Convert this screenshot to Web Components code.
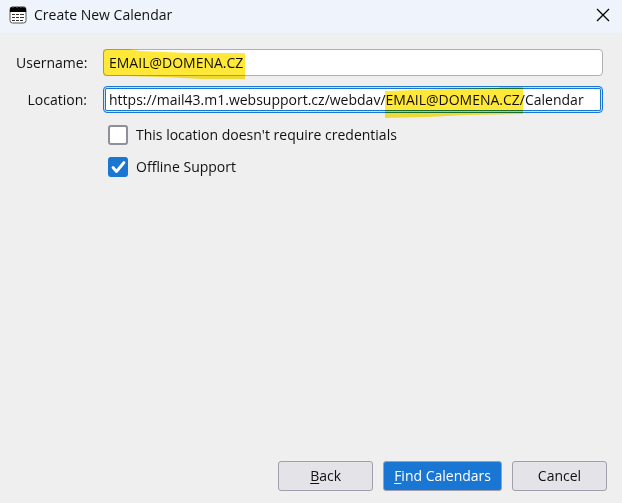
<!DOCTYPE html>
<html lang="en">
<head>
<meta charset="utf-8">
<meta name="viewport" content="width=device-width, initial-scale=1">
<title>Create New Calendar</title>
<style>
    body {
        margin: 0;
        background: #efefef;
        color: #111;
        font: 14px/20px "Open Sans", "Noto Sans", sans-serif;
    }
</style>
</head>
<body>
<calendar-dialog heading="Create New Calendar">
    <text-field label="Username:" value="EMAIL@DOMENA.CZ">
        <marker-stroke slot="marker" style="--start: 0px; --length: 142px"></marker-stroke>
    </text-field>
    <text-field label="Location:" value="https://mail43.m1.websupport.cz/webdav/EMAIL@DOMENA.CZ/Calendar" active>
        <marker-stroke slot="marker" rising style="--start: 282px; --length: 138px"></marker-stroke>
    </text-field>
    <div>
        <check-option label="This location doesn't require credentials"></check-option>
        <check-option label="Offline Support" checked></check-option>
    </div>
    <dialog-button slot="actions"><u>B</u>ack</dialog-button>
    <dialog-button slot="actions" primary><u>F</u>ind Calendars</dialog-button>
    <dialog-button slot="actions">Cancel</dialog-button>
</calendar-dialog>

<script>
class CalendarDialog extends HTMLElement {
    constructor() {
        super();
        this.attachShadow({ mode: 'open' });
    }
    connectedCallback() {
        this.shadowRoot.innerHTML = `
        <style>
            :host {
                display: flex;
                flex-direction: column;
                min-height: 100vh;
            }
            header {
                display: flex;
                align-items: center;
                gap: 7px;
                box-sizing: border-box;
                height: 33px;
                padding: 0 12px 4px 9px;
                background: #eff3fb;
            }
            h1 {
                flex: 1;
                margin: 0;
                font-size: 14px;
                font-weight: normal;
            }
            .close {
                display: flex;
                padding: 0;
                border: 0;
                background: none;
            }
            main {
                flex: 1;
                display: flex;
                flex-direction: column;
                gap: 10px;
                padding: 16px 19px 16px 16px;
            }
            footer {
                display: flex;
                justify-content: flex-end;
                gap: 10px;
                padding: 0 15px 12px;
            }
        </style>
        <header>
            <svg width="18" height="18" viewBox="0 0 18 18">
                <rect x="1" y="1" width="16" height="16" rx="2.5" fill="#fff" stroke="#555"/>
                <path d="M1 6V3q0-2 2-2h12q2 0 2 2v3z" fill="#000"/>
                <path d="M4 0v2M8 0v2M12 0v2M15 0v2" stroke="#777"/>
                <path d="M3 8.5h3M7 8.5h3M11 8.5h4M3 11.5h3M7 11.5h3M11 11.5h4M3 14.5h3M7 14.5h3M11 14.5h3" stroke="#333"/>
            </svg>
            <h1>${this.getAttribute('heading')}</h1>
            <button class="close" type="button" aria-label="Close">
                <svg width="14" height="14" viewBox="0 0 14 14">
                    <path d="M1 1l12 12M13 1L1 13" stroke="#000" stroke-width="1.3"/>
                </svg>
            </button>
        </header>
        <main><slot></slot></main>
        <footer><slot name="actions"></slot></footer>
        `;
    }
}

class TextField extends HTMLElement {
    constructor() {
        super();
        this.attachShadow({ mode: 'open' });
    }
    connectedCallback() {
        this.shadowRoot.innerHTML = `
        <style>
            :host {
                display: grid;
                grid-template-columns: 71px 1fr;
                column-gap: 16px;
                align-items: center;
            }
            label {
                text-align: right;
                white-space: nowrap;
            }
            .box {
                position: relative;
                display: flex;
            }
            input {
                flex: 1;
                min-width: 0;
                box-sizing: border-box;
                height: 27px;
                padding: 0 5px;
                border: 1px solid #b0b0b0;
                border-radius: 4px;
                outline: 0;
                background: #fff;
                color: inherit;
                font: inherit;
            }
            :host([active]) input {
                border-color: #1976d2;
                box-shadow: inset 0 0 0 1px #c4e4ff, inset 0 0 0 2px #1976d2;
            }
        </style>
        <label for="field">${this.getAttribute('label')}</label>
        <div class="box">
            <input id="field" type="text" value="${this.getAttribute('value')}">
            <slot name="marker"></slot>
        </div>
        `;
    }
}

// Felt-pen highlight laid over part of a field
class MarkerStroke extends HTMLElement {
    constructor() {
        super();
        this.attachShadow({ mode: 'open' });
    }
    connectedCallback() {
        const shape = this.hasAttribute('rising')
            ? 'M0 5L40 3L82 2L84 1H100V28L60 29L30 31L0 32Z'
            : 'M0 1Q1 0 3 0H18L26 2L60 4H100V30H70L42 28L15 27H1L0 25Z';
        this.shadowRoot.innerHTML = `
        <style>
            :host {
                position: absolute;
                top: 0;
                left: var(--start);
                width: var(--length);
                pointer-events: none;
                mix-blend-mode: multiply;
            }
            svg {
                display: block;
                width: 100%;
            }
        </style>
        <svg height="32" viewBox="0 0 100 32" preserveAspectRatio="none">
            <path d="${shape}" fill="#ffe838"/>
        </svg>
        `;
    }
}

class CheckOption extends HTMLElement {
    constructor() {
        super();
        this.attachShadow({ mode: 'open' });
    }
    connectedCallback() {
        this.shadowRoot.innerHTML = `
        <style>
            :host {
                display: flex;
                align-items: center;
                gap: 8px;
                padding: 2px 0 10px 92px;
            }
            .tick {
                display: grid;
            }
            input, svg {
                grid-area: 1 / 1;
            }
            input {
                appearance: none;
                box-sizing: border-box;
                width: 20px;
                height: 20px;
                margin: 0;
                border: 2px solid #8f8f9d;
                border-radius: 3px;
                background: #fff;
            }
            input:checked {
                border-color: #1976d2;
                background: #1976d2;
            }
            svg {
                visibility: hidden;
                pointer-events: none;
            }
            input:checked + svg {
                visibility: visible;
            }
        </style>
        <span class="tick">
            <input id="option" type="checkbox" ${this.hasAttribute('checked') ? 'checked' : ''}>
            <svg width="20" height="20" viewBox="0 0 20 20">
                <path d="M5 10.5L8.5 14.5L16 5.5" fill="none" stroke="#fff" stroke-width="2.8" stroke-linecap="round" stroke-linejoin="round"/>
            </svg>
        </span>
        <label for="option">${this.getAttribute('label')}</label>
        `;
    }
}

class DialogButton extends HTMLElement {
    constructor() {
        super();
        this.attachShadow({ mode: 'open' });
    }
    connectedCallback() {
        this.shadowRoot.innerHTML = `
        <style>
            :host {
                display: block;
            }
            button {
                min-width: 95px;
                height: 30px;
                padding: 0 10px;
                border: 1px solid #9f9fad;
                border-radius: 3px;
                background: #e4e4e8;
                color: inherit;
                font: inherit;
            }
            :host([primary]) button {
                background: #1976d2;
                color: #fff;
            }
            ::slotted(u) {
                text-underline-offset: 2px;
            }
        </style>
        <button type="button"><slot></slot></button>
        `;
    }
}

customElements.define('calendar-dialog', CalendarDialog);
customElements.define('text-field', TextField);
customElements.define('marker-stroke', MarkerStroke);
customElements.define('check-option', CheckOption);
customElements.define('dialog-button', DialogButton);
</script>
</body>
</html>
